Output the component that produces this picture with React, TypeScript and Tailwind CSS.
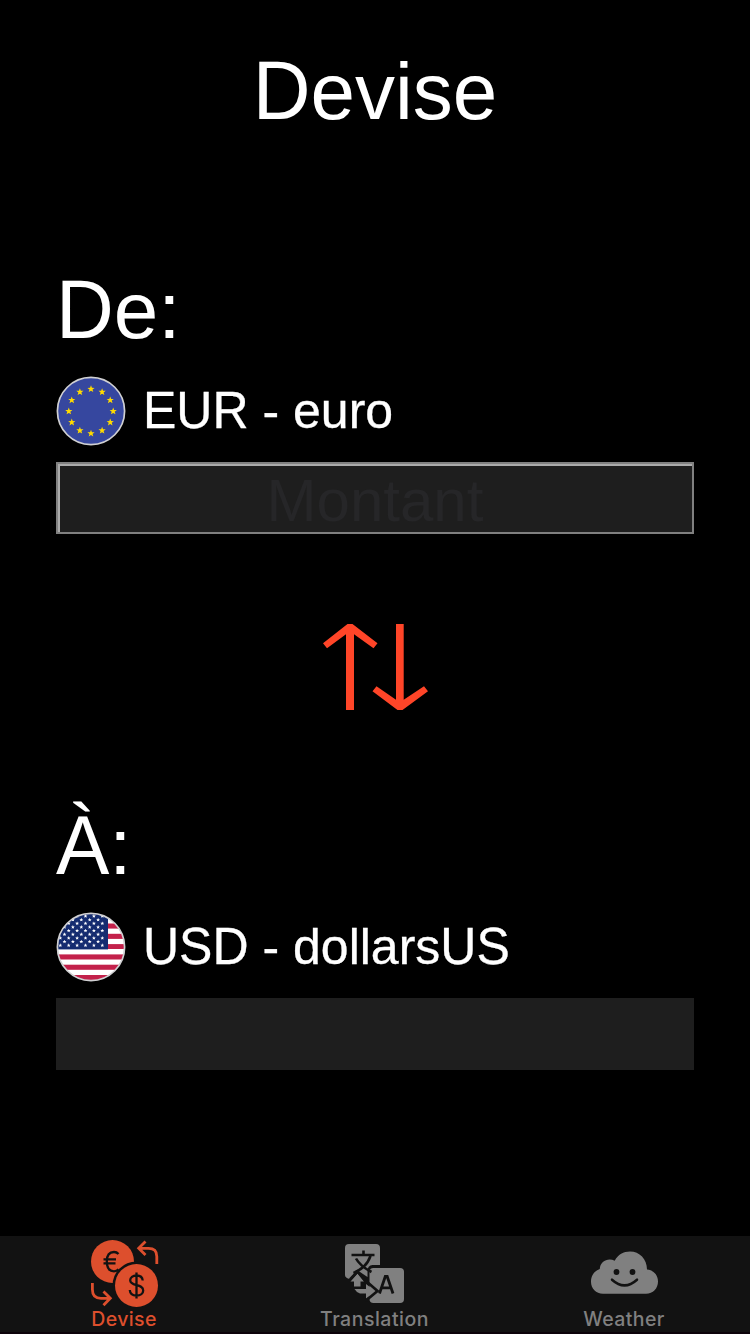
import React from "react";

const STAR = "M0 -3.7L.95 -1.2L3.6 -1.1L1.5 .5L2.3 3.1L0 1.7L-2.3 3.1L-1.5 .5L-3.6 -1.1L-.95 -1.2Z";

function EuFlag() {
  return (
    <svg className="size-[70px] shrink-0" viewBox="0 0 70 70">
      <circle cx="35" cy="35" r="33.6" fill="#36479f" stroke="#d0d0d2" strokeWidth="1.7" />
      {Array.from({ length: 12 }, (_, i) => {
        const a = (i * Math.PI) / 6;
        return (
          <path
            key={i}
            d={STAR}
            fill="#ffda00"
            transform={`translate(${35 + 22.2 * Math.sin(a)} ${35.2 - 22.2 * Math.cos(a)})`}
          />
        );
      })}
    </svg>
  );
}

function UsFlag() {
  const stars: [number, number][] = [];
  for (let r = 0; r < 9; r++) {
    for (let c = 0; c < 6; c++) {
      stars.push([r % 2 === 0 ? 4.3 + c * 8.4 : 0.1 + c * 8.4, 4 + r * 3.65]);
    }
  }
  return (
    <svg className="size-[70px] shrink-0" viewBox="0 0 70 70">
      <defs>
        <clipPath id="us-clip">
          <circle cx="35" cy="35" r="33.6" />
        </clipPath>
      </defs>
      <g clipPath="url(#us-clip)">
        <rect width="70" height="70" fill="#fff" />
        {Array.from({ length: 7 }, (_, i) => (
          <rect key={i} y={1.2 + i * 10.3} width="70" height="5.1" fill="#c3214b" />
        ))}
        <rect y="37" width="70" height="5" fill="#fff" />
        <rect width="52" height="37.4" fill="#152c70" />
        {stars.map(([x, y], i) => (
          <path
            key={i}
            d="M0 -1.9L.55 -.5L1.9 -.5L.9 .4L1.2 1.7L0 1L-1.2 1.7L-.9 .4L-1.9 -.5L-.55 -.5Z"
            fill="#fff"
            transform={`translate(${x} ${y})`}
          />
        ))}
      </g>
      <circle cx="35" cy="35" r="33.6" fill="none" stroke="#d0d0d2" strokeWidth="1.7" />
    </svg>
  );
}

function SwapArrows() {
  return (
    <svg className="h-[86px] w-[106px]" viewBox="0 0 106 86" fill="#ff4528">
      <path d="M23 86V10.3L4 24.2L0 19.3L24.5 0H29.5L54.5 19.3L50.5 24.2L31 10.3V86Z" />
      <path d="M73 0V75.7L53.5 62.3L49.5 67.2L74.5 86H79.5L105 67.2L101 62.3L80.7 75.7V0Z" />
    </svg>
  );
}

function CurrencyIcon() {
  return (
    <svg className="h-[68px] w-[68px]" viewBox="0 0 68 68" fill="none">
      <circle cx="21.5" cy="21.5" r="21.5" fill="#dd4f2d" />
      <circle cx="45.5" cy="45.5" r="24" fill="#121212" />
      <circle cx="45.5" cy="45.5" r="21.5" fill="#dd4f2d" />
      <path d="M27.5 14C26 12.3 24.8 12 23 12C18 12 15.8 16 15.8 21.5S18 31.3 23 31.3C24.8 31.3 26.3 30.8 27.5 29.3M12.5 19.3H25M12.5 23.4H24.5" stroke="#121212" strokeWidth="2.3" />
      <path d="M45.5 32.5V58.5M51.7 40.5C51.5 37.2 49 35.5 45.5 35.5C41.8 35.5 39.2 37.4 39.2 40.3C39.2 47 52.2 43.2 52.2 50.4C52.2 53.5 49.5 55.5 45.5 55.5C41.5 55.5 39 53.5 38.8 50" stroke="#121212" strokeWidth="2.3" />
      <path d="M65.8 24V16.5Q65.8 8.3 57.5 8.3H49M54.5 1.5L47.7 8.3L54.5 15.1M1.4 43V49.5Q1.4 58.3 10 58.3H18.5M12.5 51.4L19.3 58.3L12.5 65.2" stroke="#dd4f2d" strokeWidth="2.8" />
    </svg>
  );
}

function TranslationIcon() {
  return (
    <svg className="h-[60px] w-[60px]" viewBox="0 0 60 60" fill="none">
      <path d="M4 0H31Q35 0 35 4V21H27.5Q22.5 21.5 22.5 27V33L12 26L5 35Q0 34 0 31V4Q0 0 4 0Z" fill="#808080" />
      <rect x="24.5" y="24" width="34.5" height="35" rx="4" fill="#808080" />
      <path d="M6.5 11H29.5M18.5 6.5V11M25.5 12C22 21.5 17 25 8.5 29M11 14.5C14 20 19 24 26.5 28" stroke="#121212" strokeWidth="2.6" />
      <path d="M12.5 29.5L19 37.5H15.5V42.5H9V37.5H5.5Z" fill="#808080" />
      <path d="M9.5 45H21V40L30.5 47.5L21 54.5V49.5H15Q11.5 48.5 9.5 45Z" fill="#808080" />
      <path d="M5 35.5L12.5 27.5L20 36.5M20.5 36.5L32.5 47L20.5 57" stroke="#121212" strokeWidth="2.7" />
      <path d="M34.5 49.5L40.3 32.5H42.2L48 49.5M36.5 43.8H46" stroke="#121212" strokeWidth="2.8" />
    </svg>
  );
}

function WeatherIcon() {
  return (
    <svg className="h-[44px] w-[68px]" viewBox="0 0 68 44" fill="none">
      <path d="M12 42.8C5 42.8 0 37.5 0 30.8C0 24.5 3.5 19.8 8.8 18C9 10 17.5 6.2 23.7 9.8C27 3.5 32.5 0.5 39 0.5C48.5 0.5 56 8 56 18.5C63 19.3 67 24.3 67 30.5C67 37.5 62 42.8 55 42.8Z" fill="#808080" />
      <circle cx="25.5" cy="21" r="2.9" fill="#121212" />
      <circle cx="41.5" cy="21" r="2.9" fill="#121212" />
      <path d="M21 28.7Q33.5 40 46 28.7" stroke="#121212" strokeWidth="2.5" strokeLinecap="round" />
    </svg>
  );
}

/** Display-size capitals, stretched slightly upward from the baseline. */
function Tall({ children }: { children: React.ReactNode }) {
  return <span className="inline-block origin-[50%_84.6%] scale-y-[1.04]">{children}</span>;
}

/** Capitals in the currency rows. */
function Caps({ children }: { children: React.ReactNode }) {
  return <span className="inline-block origin-[50%_74.7%] scale-y-[1.04]">{children}</span>;
}

export default function App() {
  return (
    <div className="flex h-[1334px] w-[750px] flex-col overflow-hidden bg-black font-['Liberation_Sans',Arial,sans-serif] text-white">
      <main className="flex flex-1 flex-col px-14 pt-[52px]">
        <h1 className="text-center text-[80px] leading-[80px]">
          <Tall>D</Tall>evise
        </h1>
        <section className="mt-[139px]">
          <h2 className="text-[80px] leading-[80px]">
            <Tall>D</Tall>e:
          </h2>
          <div className="mt-[25px] flex gap-[17px]">
            <EuFlag />
            <span className="text-[50px] leading-[70px] [-webkit-text-stroke:0.3px_white]">
              <Caps>EUR</Caps> - euro
            </span>
          </div>
          <input
            aria-label="Montant"
            placeholder="Montant"
            className="mt-4 block h-[72px] w-full rounded-none border-2 border-[#808080] bg-[#1e1e1e] pt-[5px] text-center text-[60px] leading-[63px] shadow-[inset_2px_2px_0_#aaaaaa] outline-none placeholder:text-[#262628] placeholder:opacity-100"
          />
        </section>
        <button className="mt-[90px] flex justify-center pl-0.5" aria-label="Inverser">
          <SwapArrows />
        </button>
        <section className="mt-[97px]">
          <h2 className="text-[80px] leading-[80px]">
            <Tall>À</Tall>:
          </h2>
          <div className="mt-[25px] flex gap-[17px]">
            <UsFlag />
            <span className="text-[50px] leading-[70px] [-webkit-text-stroke:0.3px_white]">
              <Caps>USD</Caps> - dollars<Caps>US</Caps>
            </span>
          </div>
          <div className="mt-4 h-[72px] bg-[#1e1e1e]" />
        </section>
      </main>
      <nav className="grid h-[98px] shrink-0 grid-cols-3 border-b-2 border-[#0c030a] bg-[#121212] font-[Inter,sans-serif] text-[19.5px] leading-6 font-medium tracking-[0.4px] text-[#808080]">
        <div className="flex flex-col items-center text-[#dd4f2d]">
          <div className="flex h-[71px] items-start pt-1">
            <CurrencyIcon />
          </div>
          <span className="pr-0.5">Devise</span>
        </div>
        <div className="flex flex-col items-center">
          <div className="flex h-[71px] items-start pt-2">
            <TranslationIcon />
          </div>
          <span className="pr-px tracking-[0.5px]">Translation</span>
        </div>
        <div className="flex flex-col items-center">
          <div className="flex h-[71px] items-start pt-[15px]">
            <WeatherIcon />
          </div>
          <span className="pr-0.5">Weather</span>
        </div>
      </nav>
    </div>
  );
}
